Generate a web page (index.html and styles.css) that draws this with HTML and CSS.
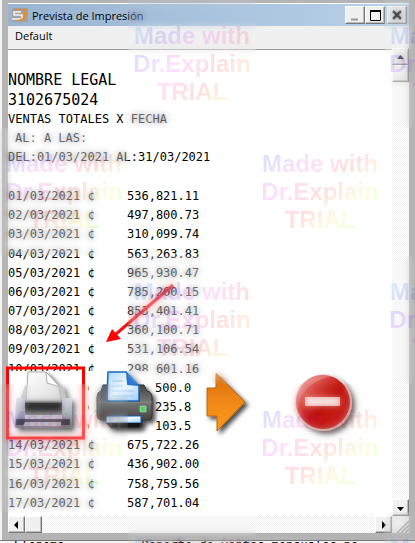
FILE: index.html
```
<!DOCTYPE html>
<html lang="es">
<head>
	<meta charset="utf-8">
	<title>Prevista de Impresión</title>
	<link rel="stylesheet" href="styles.css">
</head>
<body>

<div class="window">

	<div class="titlebar">
		<svg class="logo" width="16" height="14" viewBox="0 0 16 14">
			<rect width="16" height="14" fill="#a2a2a2"/>
			<path d="M9 4H2v3h8v4H0" fill="none" stroke="#f2f2f2" stroke-width="1.5"/>
			<path d="M3 1.500h2M6 1.500h3M11 2.500l4-1.500" stroke="#c98a3a" stroke-width="1.5"/>
			<path d="M6 12q6-1 6-6h-2l4-3 2 4h-2q0 6-8 6z" fill="#f08a1c"/>
		</svg>
		<span class="title">Prevista de Impresión</span>
		<div class="winbtns">
			<button class="btn" aria-label="Minimizar"><svg width="14" height="14"><path d="M3 11.5h7" stroke="#999" stroke-width="2"/></svg></button>
			<button class="btn" aria-label="Maximizar"><svg width="14" height="14"><path d="M2.500 3v9.500h10v-10" fill="none" stroke="#000"/><path d="M2 3h11" stroke="#000" stroke-width="2"/></svg></button>
			<button class="btn close" aria-label="Cerrar"><svg width="14" height="14"><path d="M3 3l8 8M11 3l-8 8" stroke="#111" stroke-width="2.500"/></svg></button>
		</div>
	</div>

	<div class="menubar"><button class="menu">Default</button></div>

	<div class="view">
		<div class="paper">
			<div class="head">
				<p class="big">NOMBRE LEGAL</p>
				<p class="big">3102675024</p>
				<p>VENTAS TOTALES X FECHA</p>
				<p class="sub">AL: A LAS:</p>
				<p>DEL:01/03/2021 AL:31/03/2021</p>
			</div>
			<table class="report">
				<tr><td>01/03/2021 ¢</td><td>536,821.11</td></tr>
				<tr><td>02/03/2021 ¢</td><td>497,800.73</td></tr>
				<tr><td>03/03/2021 ¢</td><td>310,099.74</td></tr>
				<tr><td>04/03/2021 ¢</td><td>563,263.83</td></tr>
				<tr><td>05/03/2021 ¢</td><td>965,930.47</td></tr>
				<tr><td>06/03/2021 ¢</td><td>785,200.15</td></tr>
				<tr><td>07/03/2021 ¢</td><td>853,401.41</td></tr>
				<tr><td>08/03/2021 ¢</td><td>360,100.71</td></tr>
				<tr><td>09/03/2021 ¢</td><td>531,106.54</td></tr>
				<tr><td>10/03/2021 ¢</td><td>298,601.16</td></tr>
				<tr class="cut"><td>¢</td><td>500.0</td></tr>
				<tr class="cut"><td>¢</td><td>235.8</td></tr>
				<tr class="cut"><td>¢</td><td>103.5</td></tr>
				<tr><td>14/03/2021 ¢</td><td>675,722.26</td></tr>
				<tr><td>15/03/2021 ¢</td><td>436,902.00</td></tr>
				<tr><td>16/03/2021 ¢</td><td>758,759.56</td></tr>
				<tr><td>17/03/2021 ¢</td><td>587,701.04</td></tr>
			</table>
		</div>

		<div class="vscroll">
			<button class="btn" aria-label="Arriba"><svg width="14" height="14"><path d="M4 9h7L7.500 5z"/></svg></button>
			<button class="btn" aria-label="Posición vertical"></button>
			<button class="btn end" aria-label="Abajo"><svg width="14" height="14"><path d="M4 6h7l-3.500 4z"/></svg></button>
		</div>
		<div class="hscroll">
			<button class="btn" aria-label="Izquierda"><svg width="14" height="14"><path d="M9 3v8L5 7z"/></svg></button>
			<button class="btn" aria-label="Posición horizontal"></button>
			<button class="btn end" aria-label="Derecha"><svg width="14" height="14"><path d="M6 3v8l4-4z"/></svg></button>
		</div>
		<svg class="grip" width="17" height="17"><path d="M5 17L17 5M9 17l8-8M13 17l4-4" stroke="#999" stroke-width="1.5"/></svg>
	</div>
</div>

<div class="behind"><span>Elenoma</span><span>Reporte de ventas mensuales po</span></div>

<!-- print toolbar floating over the report -->
<svg class="tools" width="360" height="90" viewBox="0 360 360 90">
	<defs>
		<linearGradient id="paper" x2="1" y2="1"><stop stop-color="#fff"/><stop offset="1" stop-color="#ddd"/></linearGradient>
		<linearGradient id="blue" x2="1" y2="1"><stop stop-color="#a9d4fa"/><stop offset=".5" stop-color="#f4faff"/><stop offset="1" stop-color="#9accf6"/></linearGradient>
		<linearGradient id="dark" x2="0" y2="1"><stop stop-color="#444"/><stop offset=".4" stop-color="#777"/><stop offset="1" stop-color="#2c2c2c"/></linearGradient>
		<linearGradient id="silver" x2="0" y2="1"><stop stop-color="#dcdce8"/><stop offset=".6" stop-color="#b0b0c0"/><stop offset="1" stop-color="#777"/></linearGradient>
		<linearGradient id="slot" x2="0" y2="1"><stop stop-color="#111"/><stop offset=".5" stop-color="#333"/><stop offset="1" stop-color="#888"/></linearGradient>
		<linearGradient id="orange" x2="0" y2="1"><stop stop-color="#d96a06"/><stop offset=".45" stop-color="#ee8616"/><stop offset="1" stop-color="#ff9a1c"/></linearGradient>
		<linearGradient id="red" x2="1" y2="1"><stop stop-color="#f2a09a"/><stop offset=".35" stop-color="#d33a34"/><stop offset=".55" stop-color="#bb1009"/><stop offset="1" stop-color="#d02a20"/></linearGradient>
		<filter id="shadow" x="-20%" y="-20%" width="150%" height="150%"><feDropShadow dx="3" dy="3" stdDeviation="2" flood-opacity=".7"/></filter>
	</defs>

	<path d="M7 371h77v64H7zM89 371h66v64H89zM192 378h16v50h-16z" fill="#fff"/>
	<rect x="7.500" y="368" width="76" height="70" fill="none" stroke="#f00" stroke-width="3"/>

	<g filter="url(#shadow)">
		<path d="M25 386h38l4 14H20z" fill="#c4c4c4"/>
		<path d="M16 400q0-2 2-2h7v18h37v-18h7q3 0 3 3v25q0 2-3 2H18q-3 0-3-2z" fill="url(#silver)"/>
		<path d="M26 401l2-29h17l14 14 2 15z" fill="url(#paper)" stroke="#aaa"/>
		<path d="M46 372l1 11 13 4z" fill="#fff" stroke="#aaa"/>
		<path d="M25 403h37v12H25z" fill="url(#slot)"/>
		<path d="M25 415h37v4H25z" fill="#e8e8e8"/>
		<path d="M16 419h54v6H16z" fill="#2a2a30"/>
		<path d="M25 422h36v4H23z" fill="#d8d8d8"/>
		<circle cx="66" cy="414" r="1" fill="#4c4"/>
	</g>

	<g filter="url(#shadow)">
		<path d="M103 385h41l3 6q5 1 5 6v19q0 4-4 4h-5l-1 6q-1 2-4 2h-27l-5-8h-4q-5 0-5-5v-18q0-5 4-6z" fill="url(#dark)" stroke="#333"/>
		<path d="M107 390h33v12h-33z" fill="#222"/>
		<path d="M108 372h18l13 14v15h-32z" fill="url(#blue)" stroke="#1769c2" stroke-width="1.500"/>
		<path d="M126 372l1 13 12 1z" fill="#2176d2"/>
		<path d="M112 381h11M112 386h11M112 391h22M112 396h22" stroke="#a0c8ec"/>
		<path d="M98 402h54" stroke="#999" opacity=".5"/>
		<rect x="140" y="406" width="6" height="6" rx="1" fill="#4fd367" stroke="#dfd" stroke-width=".5"/>
		<path d="M106 416h35v7h-35z" fill="url(#blue)" stroke="#145daa"/>
		<path d="M106 423h35l-2 4h-29z" fill="#151515"/>
	</g>

	<g filter="url(#shadow)">
		<path d="M207 388h9v-15l29 29-28 29v-15h-10z" fill="url(#orange)" stroke="#b76712"/>
	</g>

	<g filter="url(#shadow)">
		<circle cx="323.500" cy="402.500" r="28.500" fill="#ecdada"/>
		<circle cx="323" cy="402" r="27" fill="url(#red)"/>
		<path d="M297 408q6-27 37-32-26-4-36 16z" fill="#fff" opacity=".2"/>
		<rect x="305" y="397" width="35" height="9" fill="#fff" opacity=".93"/>
	</g>
</svg>

<svg class="arrow" width="90" height="70" viewBox="0 0 90 70">
	<path d="M73 5L16 54" stroke="#f51515" stroke-width="3"/>
	<path d="M6 62l6-13 9 10z" fill="#f00"/>
</svg>

<!-- checkerboard of 128px trial stamps -->
<div class="stamps" aria-hidden="true">
	<div class="stamp odd"><span>Made with<br>Dr.Explain<br>TRIAL</span></div>
	<div class="stamp odd"><span>Made with<br>Dr.Explain<br>TRIAL</span></div>
	<div class="stamp even"><span>Made with<br>Dr.Explain<br>TRIAL</span></div>
	<div class="stamp even"><span>Made with<br>Dr.Explain<br>TRIAL</span></div>
	<div class="stamp odd"><span>Made with<br>Dr.Explain<br>TRIAL</span></div>
	<div class="stamp odd"><span>Made with<br>Dr.Explain<br>TRIAL</span></div>
	<div class="stamp even"><span>Made with<br>Dr.Explain<br>TRIAL</span></div>
	<div class="stamp even"><span>Made with<br>Dr.Explain<br>TRIAL</span></div>
	<div class="stamp odd"><span>Made with<br>Dr.Explain<br>TRIAL</span></div>
	<div class="stamp odd"><span>Made with<br>Dr.Explain<br>TRIAL</span></div>
</div>

</body>
</html>
```
FILE: styles.css
```
* {
	box-sizing: border-box;
}

body {
	margin: 0;
	height: 100vh;
	display: flex;
	flex-direction: column;
	position: relative;
	overflow: hidden;
	background: #f4f4f4;
	font-family: "Open Sans", "Noto Sans", sans-serif;
	font-size: 11px;
	color: #000;
}

p {
	margin: 0;
}

svg {
	display: block;
}

.window {
	flex: 1;
	min-height: 0;
	display: flex;
	flex-direction: column;
	margin-left: 2px;
	border: 6px solid #b4b4b4;
	border-top-width: 3px;
	border-bottom-width: 7px;
}

.titlebar {
	height: 23px;
	flex: none;
	display: flex;
	align-items: center;
	gap: 4px;
	padding: 0 2px 0 4px;
	background: linear-gradient(to right, #99b4d1, #b9d1ea);
	border-top: 1px solid #fff;
}

.title {
	flex: 1;
}

.winbtns {
	display: flex;
}

.close {
	margin-left: 2px;
}

.btn {
	width: 17px;
	height: 17px;
	padding: 0;
	border: 1px solid;
	border-color: #fff #777 #777 #fff;
	box-shadow: inset -1px -1px #bbb;
	background: #f0f0f0;
}

.winbtns .btn {
	width: 20px;
	height: 18px;
	padding-left: 2px;
}

.menubar {
	height: 24px;
	flex: none;
	background: #f0f0f0;
	border-bottom: 1px solid #999;
}

.menu {
	padding: 0 7px;
	border: 0;
	background: none;
	font: inherit;
	line-height: 20px;
}

.view {
	flex: 1;
	min-height: 0;
	display: grid;
	grid-template: minmax(0, 1fr) 17px / 1fr 17px;
	background: #fff;
}

.paper {
	display: flex;
	flex-direction: column;
	padding: 20px 0 3px;
	font-family: "DejaVu Sans Mono", monospace;
	font-size: 12px;
	line-height: 19px;
}

.head {
	margin-bottom: 20px;
}

.big {
	font-size: 15px;
	line-height: 20px;
}

.sub {
	padding-left: 7px;
}

.report {
	flex: 1;
	align-self: flex-start;
	border-spacing: 0;
}

.report td {
	padding: 0;
	min-width: 119px;
}

.report .cut td:first-child {
	padding-left: 79px;
}

.report .cut td:last-child {
	padding-left: 28px;
}

.vscroll,
.hscroll {
	display: flex;
	background: repeating-conic-gradient(#fff 0 25%, #f0f0f0 0 50%) 0 0 / 2px 2px;
}

.vscroll {
	flex-direction: column;
	margin-top: -2px;
}

.vscroll .end {
	margin-top: auto;
}

.hscroll .end {
	margin-left: auto;
}

.grip {
	background: #f0f0f0;
}

.behind {
	height: 3px;
	flex: none;
	overflow: hidden;
	display: flex;
	gap: 77px;
	padding-left: 14px;
	border-top: 1px solid #777;
	font-family: "DejaVu Sans Mono", monospace;
	font-size: 12px;
	line-height: 8px;
	white-space: nowrap;
}

.tools {
	position: absolute;
	left: 0;
	top: 360px;
}

.arrow {
	position: absolute;
	left: 100px;
	top: 280px;
}

.stamps {
	position: absolute;
	inset: 0;
	overflow: hidden;
	display: grid;
	grid-template-columns: repeat(4, 128px);
	grid-auto-rows: 128px;
	pointer-events: none;
}

.stamp {
	position: relative;
	padding-top: 22px;
	text-align: center;
	font: bold 24px/28px "Liberation Sans", Arial, sans-serif;
}

/* soft double of whatever lies under the stamp */
.stamp::before {
	content: "";
	position: absolute;
	inset: 0;
	backdrop-filter: blur(3px);
	opacity: .5;
}

.stamp span {
	position: relative;
	display: block;
	opacity: .12;
	color: transparent;
	background: linear-gradient(135deg, #00f 10%, #f0f 30%, #f00 52%, #ff0 72%, #0f0 88%);
	background-clip: text;
	-webkit-background-clip: text;
}

/* these rows start a little further along the rainbow */
.odd span {
	background-image: linear-gradient(135deg, #0af 5%, #00f 20%, #f0f 42%, #f00 65%, #ff0 90%);
}

.odd:nth-child(4n+1) {
	grid-column: 2;
}

.odd:nth-child(4n+2) {
	grid-column: 4;
}

.even:nth-child(4n+3) {
	grid-column: 1;
}

.even:nth-child(4n) {
	grid-column: 3;
}
```
